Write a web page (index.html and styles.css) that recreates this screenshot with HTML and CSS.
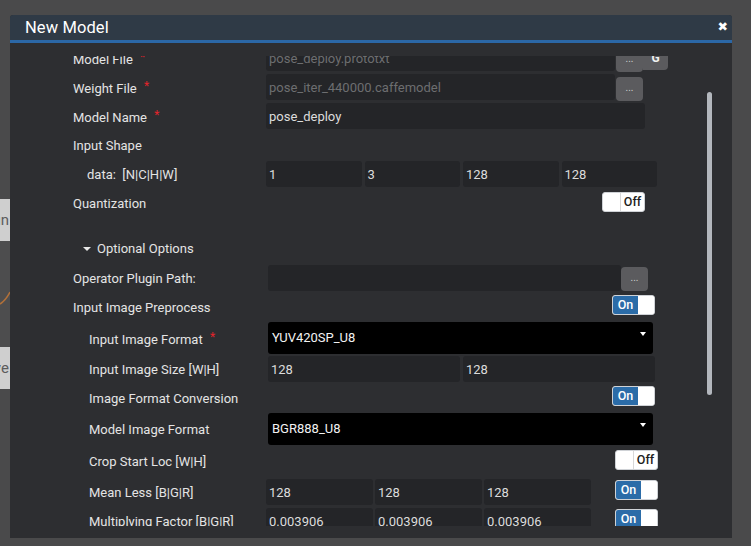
FILE: index.html
```html
<!DOCTYPE html>
<html>
<head>
<meta charset="utf-8">
<link rel="stylesheet" href="styles.css">
</head>
<body>
<div class="desk">
  <div class="bg-col">
    <div class="bg-btn first"><span>Run</span></div>
    <div class="bg-gap">
      <svg width="10" height="30" viewBox="0 0 10 30"><path d="M0 24 Q6 20 10 12" stroke="#b0703a" stroke-width="1.6" fill="none"/></svg>
    </div>
    <div class="bg-btn"><span>Save</span></div>
  </div>

  <div class="modal">
    <div class="modal-head">
      <span class="title">New Model</span>
      <span class="close">✖</span>
    </div>
    <div class="modal-body">
      <div class="viewport">
        <div class="content">
          <div class="row">
            <div class="label">Model File <span class="req">*</span></div>
            <div class="ctrl">
              <div class="input dis w349">pose_deploy.prototxt</div>
              <div class="btn">...</div>
              <div class="btn g">G</div>
            </div>
          </div>
          <div class="row">
            <div class="label">Weight File <span class="req">*</span></div>
            <div class="ctrl">
              <div class="input dis w349">pose_iter_440000.caffemodel</div>
              <div class="btn">...</div>
            </div>
          </div>
          <div class="row">
            <div class="label">Model Name <span class="req">*</span></div>
            <div class="ctrl">
              <div class="input w379">pose_deploy</div>
            </div>
          </div>
          <div class="row">
            <div class="label">Input Shape</div>
          </div>
          <div class="row">
            <div class="label data">data:&nbsp; [N|C|H|W]</div>
            <div class="ctrl quad">
              <div class="input">1</div>
              <div class="input">3</div>
              <div class="input">128</div>
              <div class="input">128</div>
            </div>
          </div>
          <div class="row">
            <div class="label">Quantization</div>
            <div class="ctrl">
              <div class="toggle off m336"><span class="knob"></span><span class="t-off">Off</span></div>
            </div>
          </div>

          <div class="heading"><span class="caret-down"></span>Optional Options</div>

          <div class="row">
            <div class="label">Operator Plugin Path:</div>
            <div class="ctrl ml2">
              <div class="input w353"></div>
              <div class="btn flush">...</div>
            </div>
          </div>
          <div class="row mb2">
            <div class="label">Input Image Preprocess</div>
            <div class="ctrl">
              <div class="toggle on m346 top1"><span class="t-on">On</span><span class="knob"></span></div>
            </div>
          </div>
          <div class="row tall mb2">
            <div class="label sub">Input Image Format <span class="req">*</span></div>
            <div class="ctrl ml2">
              <div class="select">YUV420SP_U8<span class="caret"></span></div>
            </div>
          </div>
          <div class="row">
            <div class="label sub">Input Image Size [W|H]</div>
            <div class="ctrl ml2 pair">
              <div class="input">128</div>
              <div class="input">128</div>
            </div>
          </div>
          <div class="row mb2">
            <div class="label sub">Image Format Conversion</div>
            <div class="ctrl">
              <div class="toggle on m346 top1"><span class="t-on">On</span><span class="knob"></span></div>
            </div>
          </div>
          <div class="row tall">
            <div class="label sub">Model Image Format</div>
            <div class="ctrl ml2">
              <div class="select">BGR888_U8<span class="caret"></span></div>
            </div>
          </div>
          <div class="row mb5">
            <div class="label sub">Crop Start Loc [W|H]</div>
            <div class="ctrl">
              <div class="toggle off wide m349 top2"><span class="knob"></span><span class="t-off">Off</span></div>
            </div>
          </div>
          <div class="row">
            <div class="label sub">Mean Less [B|G|R]</div>
            <div class="ctrl">
              <div class="triple">
                <div class="input">128</div>
                <div class="input">128</div>
                <div class="input">128</div>
              </div>
              <div class="toggle on wide m24 top1"><span class="t-on">On</span><span class="knob"></span></div>
            </div>
          </div>
          <div class="row">
            <div class="label sub">Multiplying Factor [B|G|R]</div>
            <div class="ctrl">
              <div class="triple">
                <div class="input">0.003906</div>
                <div class="input">0.003906</div>
                <div class="input">0.003906</div>
              </div>
              <div class="toggle on wide m24 top1"><span class="t-on">On</span><span class="knob"></span></div>
            </div>
          </div>
        </div>
      </div>
      <div class="thumb"></div>
    </div>
  </div>
</div>
</body>
</html>
```
FILE: styles.css
```css
html, body {
  margin: 0;
  padding: 0;
}
body {
  width: 751px;
  height: 546px;
  overflow: hidden;
  background: #4a4a4b;
  font-family: Roboto, "Liberation Sans", sans-serif;
}
.desk {
  position: relative;
  width: 751px;
  height: 546px;
}
.bg-col {
  width: 10px;
  padding-top: 199px;
  display: flex;
  flex-direction: column;
}
.bg-btn {
  height: 42px;
  background: #cfcfcf;
  overflow: hidden;
  display: flex;
  justify-content: flex-end;
  align-items: center;
}
.bg-btn span {
  font-size: 15px;
  color: #5c5c5c;
  white-space: nowrap;
  margin-right: 1px;
}
.bg-gap {
  height: 106px;
  display: flex;
  align-items: center;
  background: #4d4d4e;
}
.bg-gap svg {
  display: block;
  margin-top: 2px;
}
.modal {
  position: absolute;
  left: 10px;
  top: 15px;
  width: 722px;
  height: 523px;
  background: #2d2e31;
  border-radius: 3px 3px 0 0;
  display: flex;
  flex-direction: column;
}
.modal-head {
  height: 25px;
  background: #2f3a46;
  border-bottom: 3px solid #2b67a6;
  display: flex;
  align-items: center;
  justify-content: space-between;
  padding: 0 4px 0 15px;
  border-radius: 3px 3px 0 0;
}
.title {
  color: #ffffff;
  font-size: 16.5px;
  letter-spacing: 0.1px;
  margin-top: -1px;
}
.close {
  color: #ffffff;
  font-size: 12.5px;
  font-family: "DejaVu Sans", sans-serif;
  font-weight: bold;
  margin-top: -2px;
}
.modal-body {
  position: relative;
  flex: 1;
  padding: 13px 0 12px;
}
.viewport {
  height: 470px;
  overflow: hidden;
}
.content {
  margin-top: -11px;
  padding-left: 63px;
}
.row {
  display: flex;
  align-items: center;
  height: 26px;
  margin-bottom: 3px;
}
.row.tall {
  height: 32px;
}
.row.mb2 { margin-bottom: 2px; }
.row.mb5 { margin-bottom: 5px; }
.label {
  width: 193px;
  flex: none;
  color: #e4e4e4;
  font-size: 13px;
  white-space: nowrap;
}
.label.sub {
  width: 177px;
  padding-left: 16px;
}
.label.data {
  width: 179px;
  padding-left: 14px;
}
.req {
  color: #e3242b;
  font-size: 12px;
  margin-left: 4px;
  vertical-align: 3px;
}
.ctrl {
  display: flex;
  align-items: flex-start;
  height: 100%;
}
.ctrl.ml2 { margin-left: 2px; }
.input {
  height: 26px;
  line-height: 27px;
  background: #242528;
  border-radius: 3px;
  color: #dcdcdc;
  font-size: 13px;
  padding-left: 3px;
  box-sizing: border-box;
  white-space: nowrap;
  overflow: hidden;
}
.input.dis { color: #6d6e70; }
.w349 { width: 349px; }
.w353 { width: 353px; }
.w379 { width: 379px; }
.quad {
  width: 391px;
  gap: 3px;
}
.quad .input { flex: 1; }
.pair {
  width: 387px;
  gap: 3px;
}
.pair .input { flex: 1; }
.triple {
  display: flex;
  width: 325px;
  gap: 2px;
}
.triple .input { flex: 1; }
.btn {
  width: 27px;
  height: 24px;
  margin-top: 3px;
  margin-left: 1px;
  background: #5b5b5e;
  border-radius: 4px;
  color: #d0d0d0;
  font-size: 10px;
  text-align: center;
  line-height: 22px;
  box-sizing: border-box;
}
.btn.flush {
  margin-top: 2px;
  margin-left: 0;
}
.btn.g {
  width: 25px;
  height: 25px;
  margin-top: 0;
  margin-left: 0;
  border-radius: 0 4px 4px 0;
  color: #f0f0f0;
  font-size: 12px;
  font-weight: bold;
  line-height: 26px;
}
.toggle {
  display: flex;
  width: 43px;
  height: 20px;
  box-sizing: border-box;
  border: 1px solid #cfd2d6;
  border-radius: 3px;
  background: #ffffff;
  overflow: hidden;
  font-size: 12.5px;
  font-weight: 500;
}
.toggle.off .knob {
  width: 17px;
  border-right: 1px solid #d8d8d8;
}
.t-off {
  flex: 1;
  color: #1e1e1e;
  text-align: center;
  line-height: 18px;
}
.toggle.on .t-on {
  width: 25px;
  background: #2b6ca8;
  color: #ffffff;
  text-align: center;
  line-height: 18px;
}
.toggle.on .knob {
  flex: 1;
  background: #ffffff;
}
.m336 { margin-left: 336px; margin-top: 2px; }
.m346 { margin-left: 346px; }
.m349 { margin-left: 349px; }
.m24 { margin-left: 24px; }
.top1 { margin-top: 1px; }
.top2 { margin-top: 2px; }
.heading {
  margin-top: 19px;
  margin-bottom: 4px;
  height: 26px;
  display: flex;
  align-items: center;
  padding-left: 10px;
  color: #e4e4e4;
  font-size: 13px;
}
.caret-down {
  width: 0;
  height: 0;
  border-left: 4px solid transparent;
  border-right: 4px solid transparent;
  border-top: 4px solid #e8e8e8;
  margin-right: 6px;
  margin-top: 1px;
}
.select {
  width: 385px;
  height: 32px;
  background: #000000;
  border-radius: 3px;
  color: #f2f2f2;
  font-size: 13px;
  line-height: 32px;
  padding-left: 4px;
  box-sizing: border-box;
  display: flex;
  justify-content: space-between;
}
.caret {
  width: 0;
  height: 0;
  border-left: 3.5px solid transparent;
  border-right: 3.5px solid transparent;
  border-top: 4px solid #ffffff;
  margin-top: 10px;
  margin-right: 7px;
}
.thumb {
  position: absolute;
  left: 697px;
  top: 49px;
  width: 5px;
  height: 303px;
  background: #b3b7bd;
  border-radius: 3px;
}
```
